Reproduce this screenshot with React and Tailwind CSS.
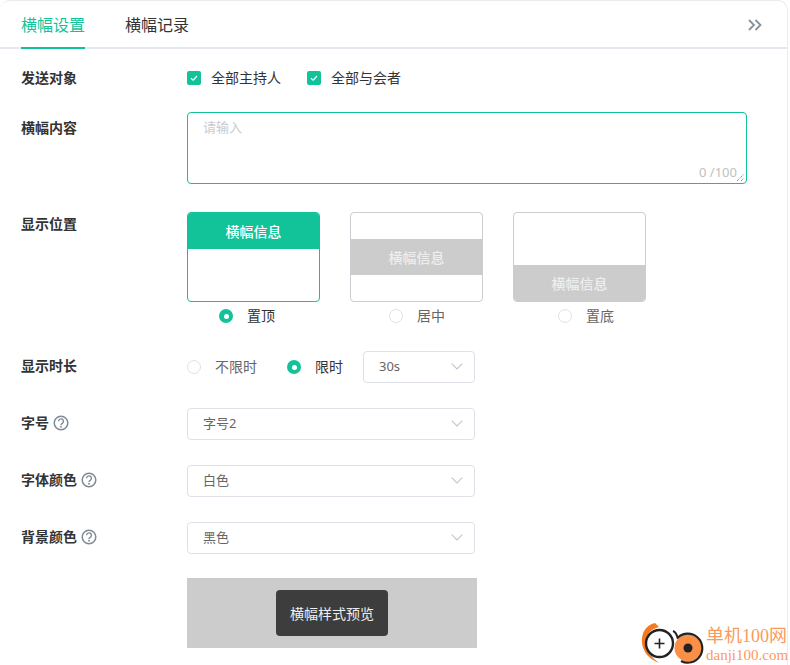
const F = { fontFamily: '"Noto Sans", "Noto Sans CJK SC", sans-serif' };

function Check({ label }) {
  return (
    <div className="flex items-center">
      <span className="flex h-[14px] w-[14px] items-center justify-center rounded-[2px] bg-[#12c39a]">
        <svg width="10" height="10" viewBox="0 0 10 10" fill="none" stroke="#fff" strokeWidth="1.2"><path d="M2 5.2 4.2 7.2 8 3" /></svg>
      </span>
      <span className="ml-[10px] text-[14px] leading-5 text-[#333]">{label}</span>
    </div>
  );
}

function Radio({ on, label }) {
  return (
    <div className="flex items-center">
      {on ? (
        <span className="flex h-[14px] w-[14px] items-center justify-center rounded-full bg-[#12c39a]">
          <span className="h-[5px] w-[5px] rounded-full bg-white" />
        </span>
      ) : (
        <span className="h-[14px] w-[14px] rounded-full border border-[#dfe1e8] bg-white" />
      )}
      <span className={`ml-[14px] text-[14px] leading-5 ${on ? "text-[#333]" : "text-[#666]"}`}>{label}</span>
    </div>
  );
}

function Select({ value, w = "w-[288px]" }) {
  return (
    <div className={`flex h-[32px] ${w} items-center justify-between rounded-[4px] border border-[#dfe1e8] bg-white pb-[1px] pl-[15px] pr-[11px] text-[13px] text-[#666]`}>
      <span>{value}</span>
      <svg width="12" height="7" viewBox="0 0 12 7" fill="none" stroke="#c3c5cc" strokeWidth="1.1"><path d="M.7.7 6 6 11.3.7" /></svg>
    </div>
  );
}

function Help() {
  return (
    <svg width="16" height="16" viewBox="0 0 16 16" fill="none" className="ml-[4px]">
      <circle cx="8" cy="8" r="6.8" stroke="#7f8a94" strokeWidth="1.5" />
      <path d="M5.6 6.3a2.4 2.4 0 1 1 3.7 2c-.9.5-1.3.9-1.3 1.7" stroke="#7f8a94" strokeWidth="1.4" />
      <circle cx="8" cy="11.8" r=".95" fill="#7f8a94" />
    </svg>
  );
}

function Label({ children, help, tight }) {
  return (
    <div className={`flex w-[166px] shrink-0 items-center ${tight ? "" : "pb-[2px]"} text-[14px] font-bold leading-5 text-[#333]`}>
      {children}
      {help && <Help />}
    </div>
  );
}

function Pos({ active, label, bar, offset }) {
  return (
    <div className="w-[133px]">
      <div className={`flex h-[90px] flex-col overflow-hidden rounded-[4px] border ${active ? "border-[#12c39a]" : "border-[#cbcdd2]"} ${bar}`}>
        <div className={`flex h-[36px] items-center justify-center text-[14px] font-medium ${active ? "bg-[#12c39a] text-white" : "bg-[#cccccc] text-[#eeeeee]"}`}>
          横幅信息
        </div>
      </div>
      <div className={`mt-[4px] flex ${offset}`}>
        <Radio on={active} label={label} />
      </div>
    </div>
  );
}

export default function App() {
  return (
    <div style={F} className="relative h-[665px] w-[790px] overflow-hidden bg-white">
      <div className="h-[700px] w-[788px] rounded-t-[10px] border-r border-t border-[#ebebef]">
        <div className="flex h-[48px] items-start justify-between border-b-2 border-[#e6e7ef] pl-[21px] pr-[25px]">
          <div className="flex">
            <div className="flex h-[48px] w-[64px] items-center justify-center whitespace-nowrap border-b-2 border-[#12c39a] pt-[2px] text-[16px] text-[#12c39a]">横幅设置</div>
            <div className="ml-[40px] flex h-[48px] w-[64px] items-center justify-center whitespace-nowrap text-[16px] text-[#333]">横幅记录</div>
          </div>
          <svg width="14" height="12" viewBox="0 0 14 12" fill="none" stroke="#87919c" strokeWidth="1.8" className="mt-[18px]"><path d="M1 1l5 5-5 5M7.5 1l5 5-5 5" /></svg>
        </div>

        <div className="pl-[21px]">
          <div className="mt-[19px] flex h-[20px] items-center">
            <Label tight>发送对象</Label>
            <div className="flex gap-[26px]">
              <Check label="全部主持人" />
              <Check label="全部与会者" />
            </div>
          </div>

          <div className="mt-[24px] flex">
            <div className="pt-[6px]"><Label>横幅内容</Label></div>
            <div className="relative h-[72px] w-[560px] rounded-[4px] border border-[#12c39a] px-[15px] py-[4px]">
              <div className="text-[13px] leading-5 text-[#c8cad0]">请输入</div>
              <div className="absolute bottom-[1px] right-[9px] text-[13px] leading-5 text-[#c0c0c0]">0 /100</div>
              <svg width="8" height="8" viewBox="0 0 8 8" stroke="#666" strokeWidth="1" strokeDasharray="1 1" className="absolute bottom-[1px] right-[1px]"><path d="M0 7 7 0M4 7 7 4" /></svg>
            </div>
          </div>

          <div className="mt-[28px] flex">
            <div className="pt-[2px]"><Label>显示位置</Label></div>
            <div className="flex gap-[30px]">
              <Pos active label="置顶" bar="justify-start" offset="pl-[32px]" />
              <Pos label="居中" bar="justify-center" offset="pl-[39px]" />
              <Pos label="置底" bar="justify-end" offset="pl-[45px]" />
            </div>
          </div>

          <div className="mt-[25px] flex h-[32px] items-center">
            <Label>显示时长</Label>
            <Radio label="不限时" />
            <div className="ml-[30px]"><Radio on label="限时" /></div>
            <div className="ml-[20px]"><Select value="30s" w="w-[112px]" /></div>
          </div>

          <div className="mt-[25px] flex h-[32px] items-center">
            <Label help>字号</Label>
            <Select value="字号2" />
          </div>
          <div className="mt-[25px] flex h-[32px] items-center">
            <Label help>字体颜色</Label>
            <Select value="白色" />
          </div>
          <div className="mt-[25px] flex h-[32px] items-center">
            <Label help>背景颜色</Label>
            <Select value="黑色" />
          </div>

          <div className="ml-[166px] mt-[24px] flex h-[70px] w-[290px] items-center justify-center bg-[#cccccc]">
            <div className="flex h-[46px] w-[112px] items-center justify-center rounded-[4px] bg-[#3d3d3d] text-[14px] text-[#eeeeee]">横幅样式预览</div>
          </div>
        </div>
      </div>

      <div className="absolute left-[641px] top-[620px] flex items-start">
        <svg width="64" height="45" viewBox="0 0 64 45" fill="none">
          <path d="M14 3C5 5 0 13 1 23c1 9 7 16 17 20-6-5-13-10-13-20C5 14 10 9 18 7Z" fill="#f47a20" />
          <circle cx="18.5" cy="23.5" r="13.5" fill="#fff" stroke="#222" strokeWidth="2.4" />
          <path d="M18.5 18.5v10M13.5 23.5h10" stroke="#222" strokeWidth="1.6" />
          <path d="M32 11c3 1 4 4 5 8" stroke="#222" strokeWidth="2" />
          <circle cx="47" cy="28" r="13.5" fill="#fb8f45" />
          <path d="M37 17.5A14.5 14.5 0 1 1 40 41" stroke="#222" strokeWidth="2.2" />
          <circle cx="47" cy="28" r="4.5" fill="#222" />
        </svg>
        <div className="ml-[1px] flex flex-col items-start whitespace-nowrap">
          <span style={{ fontFamily: '"Liberation Serif", "Noto Sans CJK SC", serif' }} className="mt-[5px] text-[18px] leading-[22px] text-[#fb9a5c]">单机100网</span>
          <span style={{ fontFamily: '"Liberation Serif", serif' }} className="text-[15px] leading-[16px] text-[#fb9a5c]">danji100.com</span>
        </div>
      </div>
    </div>
  );
}
